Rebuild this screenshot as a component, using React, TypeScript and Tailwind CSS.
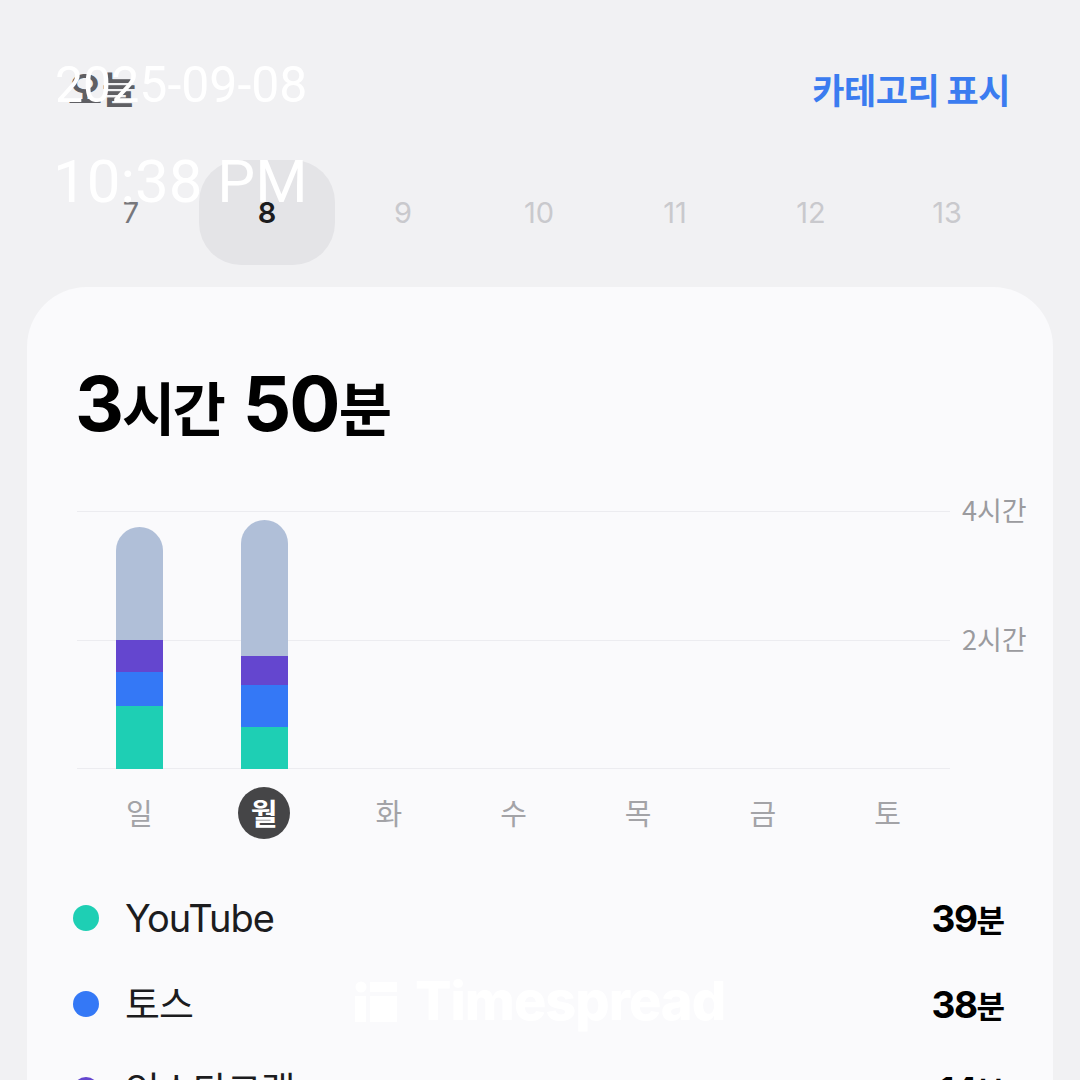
import React from 'react';

const KR = "font-['Inter','Noto_Sans_CJK_KR',sans-serif]";

const weekDates = [7, 8, 9, 10, 11, 12, 13];
const dayNames = ['일', '월', '화', '수', '목', '금', '토'];

const bars: Record<number, number[]> = {
  0: [63, 34, 32, 113],
  1: [42, 42, 29, 136],
};
const segColors = ['bg-[#1ecfb4]', 'bg-[#3478f6]', 'bg-[#6446cf]', 'bg-[#b0bfd8]'];

const legend = [
  { name: 'YouTube', value: '39', dot: 'bg-[#1ecfb4]' },
  { name: '토스', value: '38', dot: 'bg-[#3478f6]' },
  { name: '인스타그램', value: '14', dot: 'bg-[#6446cf]' },
];

function Bar({ segs }: { segs: number[] }) {
  return (
    <div className="flex w-[47px] flex-col-reverse justify-self-center overflow-hidden rounded-t-full">
      {segs.map((h, i) => (
        <div key={i} className={segColors[i]} style={{ height: h }} />
      ))}
    </div>
  );
}

function Watermark() {
  return (
    <div className="pointer-events-none absolute left-[355px] top-[974px] flex items-center gap-[18px] text-white">
      <svg width="42" height="41" viewBox="0 0 42 41" fill="white">
        <circle cx="6" cy="6" r="5.5" />
        <rect x="15" y="1" width="27" height="10" />
        <rect x="0" y="15" width="11" height="26" />
        <rect x="15" y="15" width="27" height="26" />
      </svg>
      <span className="font-['Inter',sans-serif] text-[54px] font-extrabold leading-none tracking-[-1px]">
        Timespread
      </span>
    </div>
  );
}

export default function App() {
  return (
    <div className={`relative h-[1080px] w-[1080px] overflow-hidden bg-[#f1f1f3] ${KR}`}>
      {/* header */}
      <div className="mt-[71px] flex h-[34px] items-center justify-between pl-[68px] pr-[70px]">
        <span className="font-['Noto_Sans_CJK_KR',sans-serif] text-[37px] font-bold leading-none text-[#5f5f63]">오늘</span>
        <span className="font-['Noto_Sans_CJK_KR',sans-serif] text-[35px] font-bold leading-none tracking-[-0.5px] text-[#3b7cf0]">
          카테고리 표시
        </span>
      </div>

      {/* week strip */}
      <div className="ml-[63px] mt-[55px] grid w-[952px] grid-cols-7">
        {weekDates.map((d, i) => (
          <div
            key={d}
            className={`flex h-[105px] items-center justify-center rounded-[42px] font-['Inter',sans-serif] text-[29px] leading-none ${
              i === 1 ? 'bg-[#e4e4e7] font-semibold text-[#1c1c1e]' : i === 0 ? 'text-[#77777b]' : 'text-[#c9c9cd]'
            }`}
          >
            {d}
          </div>
        ))}
      </div>

      {/* card */}
      <div className="mx-[27px] mt-[22px] h-[900px] rounded-[60px] bg-[#fafafc] pt-[78px]">
        <div className="flex items-baseline pl-[48px] leading-none text-black">
          <span className="font-['Inter',sans-serif] text-[76px] font-bold tracking-[-2px]">3</span>
          <span className="font-['Noto_Sans_CJK_KR',sans-serif] text-[58px] font-bold tracking-[-3px]">시간</span>
          <span className="ml-[20px] font-['Inter',sans-serif] text-[76px] font-bold tracking-[-2px]">50</span>
          <span className="font-['Noto_Sans_CJK_KR',sans-serif] text-[58px] font-bold">분</span>
        </div>

        {/* chart */}
        <div className="mt-[70px] flex pl-[50px]">
          <div className="relative h-[258px] w-[873px]">
            <div className="absolute left-0 right-0 top-0 h-px bg-[#ececf0]" />
            <div className="absolute left-0 right-0 top-[129px] h-px bg-[#ececf0]" />
            <div className="absolute bottom-0 left-0 right-0 h-px bg-[#ececf0]" />
            <div className="relative grid h-full grid-cols-7 items-end">
              {dayNames.map((_, i) => (bars[i] ? <Bar key={i} segs={bars[i]} /> : <div key={i} />))}
            </div>
          </div>
          <div className="relative w-[103px] font-['Noto_Sans_CJK_KR',sans-serif] text-[27px] leading-none text-[#9b9b9f]">
            <span className="absolute left-[12px] top-[-15px]">4시간</span>
            <span className="absolute left-[12px] top-[114px]">2시간</span>
          </div>
        </div>

        <div className="ml-[50px] mt-[18px] grid w-[873px] grid-cols-7">
          {dayNames.map((d, i) => (
            <div key={d} className="flex h-[52px] items-center justify-center">
              {i === 1 ? (
                <span className="flex h-[52px] w-[52px] items-center justify-center rounded-full bg-[#454547] font-['Noto_Sans_CJK_KR',sans-serif] text-[29px] font-bold text-white">
                  {d}
                </span>
              ) : (
                <span className="font-['Noto_Sans_CJK_KR',sans-serif] text-[29px] text-[#a3a3a7]">{d}</span>
              )}
            </div>
          ))}
        </div>

        {/* legend */}
        <div className="mt-[36px] pl-[46px] pr-[48px]">
          {legend.map((row) => (
            <div key={row.name} className="flex h-[86px] items-center justify-between">
              <div className="flex items-center gap-[26px]">
                <span className={`h-[26px] w-[26px] rounded-full ${row.dot}`} />
                <span className="text-[38px] leading-none tracking-[-1px] text-[#1c1c1e]">{row.name}</span>
              </div>
              <span className="flex items-baseline leading-none text-black">
                <span className="font-['Inter',sans-serif] text-[37px] font-bold tracking-[-1.5px]">{row.value}</span>
                <span className="font-['Noto_Sans_CJK_KR',sans-serif] text-[31px] font-bold">분</span>
              </span>
            </div>
          ))}
        </div>
      </div>

      {/* screen recorder overlay */}
      <div className="pointer-events-none absolute left-[55px] top-[60px] font-['Roboto',sans-serif] text-[50px] leading-none text-white">
        2025-09-08
      </div>
      <div className="pointer-events-none absolute left-[53px] top-[152px] font-['Roboto',sans-serif] text-[60px] leading-none text-white">
        10:38 PM
      </div>

      <Watermark />
    </div>
  );
}
